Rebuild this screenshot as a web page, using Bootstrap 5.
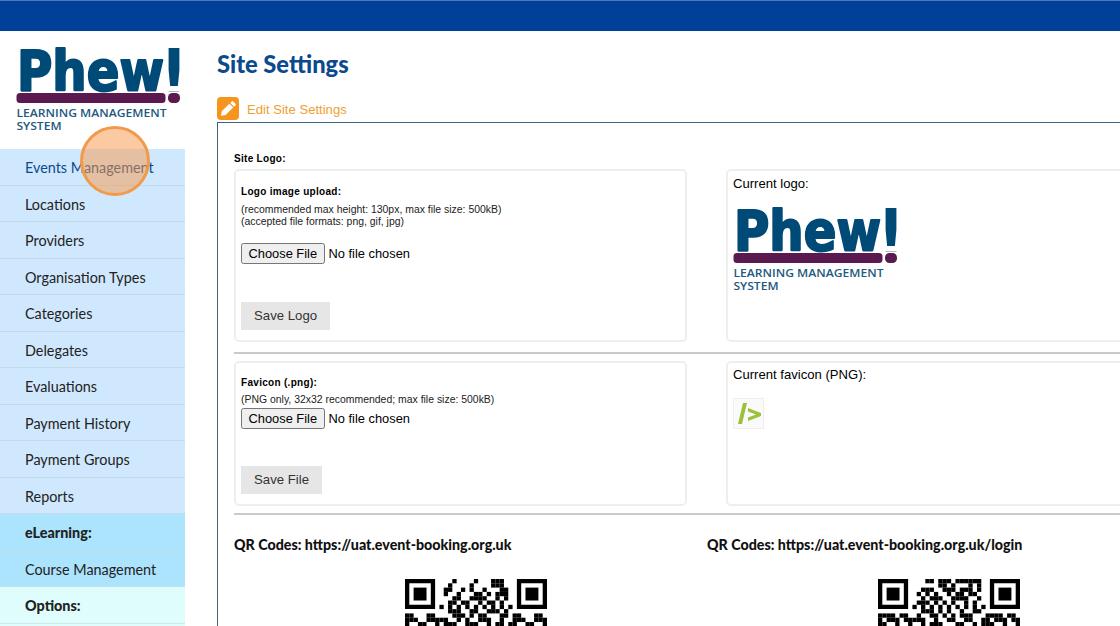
<!DOCTYPE html>
<html lang="en"><head><meta charset="utf-8"><title>Site Settings</title>
<link href="https://cdn.jsdelivr.net/npm/bootstrap@5.3.0/dist/css/bootstrap.min.css" rel="stylesheet">
<style>
html,body{height:626px;overflow:hidden;background:#fff}
body{font-family:"Liberation Sans",Arial,sans-serif;color:#000;font-size:13.33px}
.topstrip{height:31px;background:#004098;border-top:1px solid #4d79b5}
.sidecol{width:185px;flex:none}
.logoholder{height:118px;padding:16px 0 0 16px}
.logoimg{display:block;width:166px;height:90px}
.sidenav .list-group-item{height:36.5px;padding:0 0 0 25px;line-height:37px;font-family:Lato,sans-serif;font-size:14.38px;color:#222;background:#d0e8fd;border:0;border-bottom:1px solid #c3dbe9;border-radius:0}
.sidenav .list-group-item.navcurrent{color:#0b4a8e}
.sidenav .list-group-item.navblue{background:#ace3fd;border-bottom-color:#bfe1ee}
.sidenav .list-group-item.navpale{background:#e0fdfd;border-bottom-color:#cfe7e7}
.navhead{font-weight:900}
.maincol{margin-left:32px;width:1000px;flex:none}
.pagetitle{font-family:Lato,sans-serif;font-weight:900;font-size:23.7px;color:#0b4a8e;margin:19px 0 0;line-height:28px}
.editlink{margin-top:19px;height:24px;color:#f0a030;font-size:13.1px;gap:8px;line-height:26px}
.editicon{width:22px;height:23px;background:#f7941d;border-radius:4px;flex:none}
.settingspanel{width:960px;border:1px solid #3d6484;padding:30px 16px 0;height:600px;margin-top:1px}
.fieldtitle{font-size:10px;font-weight:700;letter-spacing:.3px;line-height:12px;margin:0}
.sitelogo{margin-bottom:4px}
.uprow{width:473px;flex:none}
.boxed{width:453px;border:2px solid #eee;border-radius:5px;padding:0 5px}
.boxed.h1box{height:173px}
.boxed.h2box{height:145px}
.rightcell{padding-left:19px}
.hintline{font-size:10.45px;line-height:12px;color:#222;margin:0}
.filepick{display:block;font-size:12.85px;line-height:normal;font-family:"Liberation Sans",Arial,sans-serif}
.filepick::file-selector-button{padding:1px 5.500px;margin-right:4px}
.savebtn{background:#e6e6e6;border:0;border-radius:0;color:#333;font-size:13.2px;height:28px;padding:0 13px;line-height:28px;display:block;margin-top:37px}
.savelogo{margin-top:38px}
.rulefull{border:0;border-top:2px solid #c6cbcc;opacity:1;width:960px}
.ruleone{margin:10px 0 7px}
.ruletwo{margin:7px 0 21px}
.uptitle{padding-top:15px;margin-bottom:6px}
.favtitle{padding-top:14px;margin-bottom:5px}
.filelogo{margin-top:15px}
.filefav{margin-top:2px}
.curlabel{font-size:13.1px;line-height:16px;margin:0;padding-top:5px}
.curfav{padding-top:4px}
.logoshift{margin-top:15px}
.faviconbox{width:31px;height:31px;border:1px solid #eee;background:#fafafa;margin-top:15px}
.qrhead{font-family:Lato,sans-serif;font-weight:900;font-size:14.25px;margin:0;line-height:18px;color:#111}
.qrimg{display:block;width:142px;height:142px;margin-left:171px;margin-top:25px}
.spot{position:absolute;left:80px;top:126px;width:70px;height:70px;border-radius:50%;border:3px solid #f09a4a;background:rgba(250,150,70,.5)}
</style></head><body>
<svg width="0" height="0" class="d-block" aria-hidden="true"><defs>
<symbol id="phewlogo" viewBox="0 0 166 90">
<text x="1" y="43" font-family="DejaVu Sans" font-weight="700" font-size="55" fill="#004a78" stroke="#004a78" stroke-width="2.2" stroke-linejoin="round" textLength="147" lengthAdjust="spacingAndGlyphs">Phew</text>
<text x="144" y="58" font-family="DejaVu Sans" font-weight="700" font-size="78" fill="#004a78" textLength="28" lengthAdjust="spacingAndGlyphs">!</text>
<rect x="150.500" y="44.500" width="16" height="14" fill="#fff"/>
<rect x="0.5" y="46" width="149" height="10" rx="3.500" fill="#5a1a4f"/>
<rect x="152" y="46" width="12" height="10" rx="4.500" fill="#5a1a4f"/>
<text x="0.5" y="70" font-family="Open Sans" font-weight="600" font-size="11" fill="#235a80" textLength="150" lengthAdjust="spacingAndGlyphs">LEARNING MANAGEMENT</text>
<text x="0.5" y="83.200" font-family="Open Sans" font-weight="600" font-size="11" fill="#235a80" textLength="45" lengthAdjust="spacingAndGlyphs">SYSTEM</text>
</symbol></defs></svg>
<div class="topstrip"></div>
<div class="d-flex">
<aside class="sidecol">
<div class="logoholder"><svg class="logoimg"><use href="#phewlogo"/></svg></div>
<div class="list-group list-group-flush sidenav">
<a class="list-group-item navcurrent">Events Management</a>
<a class="list-group-item">Locations</a>
<a class="list-group-item">Providers</a>
<a class="list-group-item">Organisation Types</a>
<a class="list-group-item">Categories</a>
<a class="list-group-item">Delegates</a>
<a class="list-group-item">Evaluations</a>
<a class="list-group-item">Payment History</a>
<a class="list-group-item">Payment Groups</a>
<a class="list-group-item">Reports</a>
<a class="list-group-item navblue navhead">eLearning:</a>
<a class="list-group-item navblue">Course Management</a>
<a class="list-group-item navpale navhead">Options:</a>
<div class="list-group-item navpale" aria-hidden="true"></div>
</div>
</aside>
<main class="maincol">
<h1 class="pagetitle">Site Settings</h1>
<div class="editlink d-flex align-items-start">
<span class="editicon d-flex align-items-center justify-content-center">
<svg width="17" height="17" viewBox="0 0 17 17"><path d="M11.6 1.6a1.2 1.2 0 0 1 1.7 0l2.1 2.1a1.2 1.2 0 0 1 0 1.7l-1.3 1.3-3.8-3.8zM9.4 3.8l3.8 3.8-7.6 7.5-4.2.6a.3.3 0 0 1-.3-.4l.6-4z" fill="#fff"/></svg>
</span>
<span>Edit Site Settings</span>
</div>
<div class="settingspanel">
<p class="fieldtitle sitelogo">Site Logo:</p>
<div class="d-flex">
<div class="uprow"><div class="boxed h1box">
<p class="fieldtitle uptitle">Logo image upload:</p>
<p class="hintline">(recommended max height: 130px, max file size: 500kB)<br>(accepted file formats: png, gif, jpg)</p>
<input class="filepick filelogo" type="file">
<button class="savebtn savelogo" type="button">Save Logo</button>
</div></div>
<div class="uprow rightcell"><div class="boxed h1box">
<p class="curlabel">Current logo:</p>
<svg class="logoimg logoshift"><use href="#phewlogo"/></svg>
</div></div>
</div>
<hr class="rulefull ruleone">
<div class="d-flex">
<div class="uprow"><div class="boxed h2box">
<p class="fieldtitle favtitle">Favicon (.png):</p>
<p class="hintline">(PNG only, 32x32 recommended; max file size: 500kB)</p>
<input class="filepick filefav" type="file">
<button class="savebtn" type="button">Save File</button>
</div></div>
<div class="uprow rightcell"><div class="boxed h2box">
<p class="curlabel curfav">Current favicon (PNG):</p>
<div class="faviconbox d-flex align-items-center justify-content-center">
<svg width="27" height="27" viewBox="0 0 27 27"><path d="M8 3h4L7 24H3z" fill="#9bc23c"/><path d="M13 8l13 5v3l-13 5v-3.500l8-3-8-3z" fill="#9bc23c"/></svg>
</div>
</div></div>
</div>
<hr class="rulefull ruletwo">
<div class="d-flex">
<div class="uprow"><h2 class="qrhead">QR Codes: https://uat.event-booking.org.uk</h2><svg class="qrimg" data-qr="a" viewBox="0 0 33 33"></svg></div>
<div class="uprow"><h2 class="qrhead">QR Codes: https://uat.event-booking.org.uk/login</h2><svg class="qrimg" data-qr="b" viewBox="0 0 33 33"></svg></div>
</div>
</div>
</main>
</div>
<div class="spot"></div>
<script src="https://cdn.jsdelivr.net/npm/bootstrap@5.3.0/dist/js/bootstrap.bundle.min.js"></script>
<script>
var rows={
a:["00010000100011100","00100001000011100","01100101001000110","01001000110101110","00011001111001010","00110110010110100","10101010101010101","00111001100111010","00011101011000110","11001010011100100","01110011100101101"],
b:["00011011101111110","00000011010001010","00111001110111010","01010100101101100","00101110011110010","01110101010010100","10101010101010101","00111010100100110","01001101010111000","11100100110011001","00101110001100101"]};
var bottom={a:["1100011001","1110011101","1001100110"],b:["1111011000","1011101100","1100100111"]};
document.querySelectorAll('.qrimg').forEach(function(s){
 var k=s.dataset.qr,h='';
 function r(x,y,w,hh){h+='<rect x="'+x+'" y="'+y+'" width="'+w+'" height="'+hh+'"/>';}
 [0,26].forEach(function(x){
  h+='<path fill-rule="evenodd" d="M'+x+' 0h7v7h-7zM'+(x+1)+' 1v5h5v-5z"/>';r(x+2,2,3,3);});
 rows[k].forEach(function(line,y){for(var i=0;i<17;i++)if(line[i]=='1')r(8+i,y,1,1);});
 bottom[k].forEach(function(line,j){for(var i=0;i<8;i++){if(line[i]=='1')r(i,8+j,1,1);if(line[i]=='1')r(25+i,8+j,1,1);}});
 s.innerHTML=h;
});
</script>
</body></html>
